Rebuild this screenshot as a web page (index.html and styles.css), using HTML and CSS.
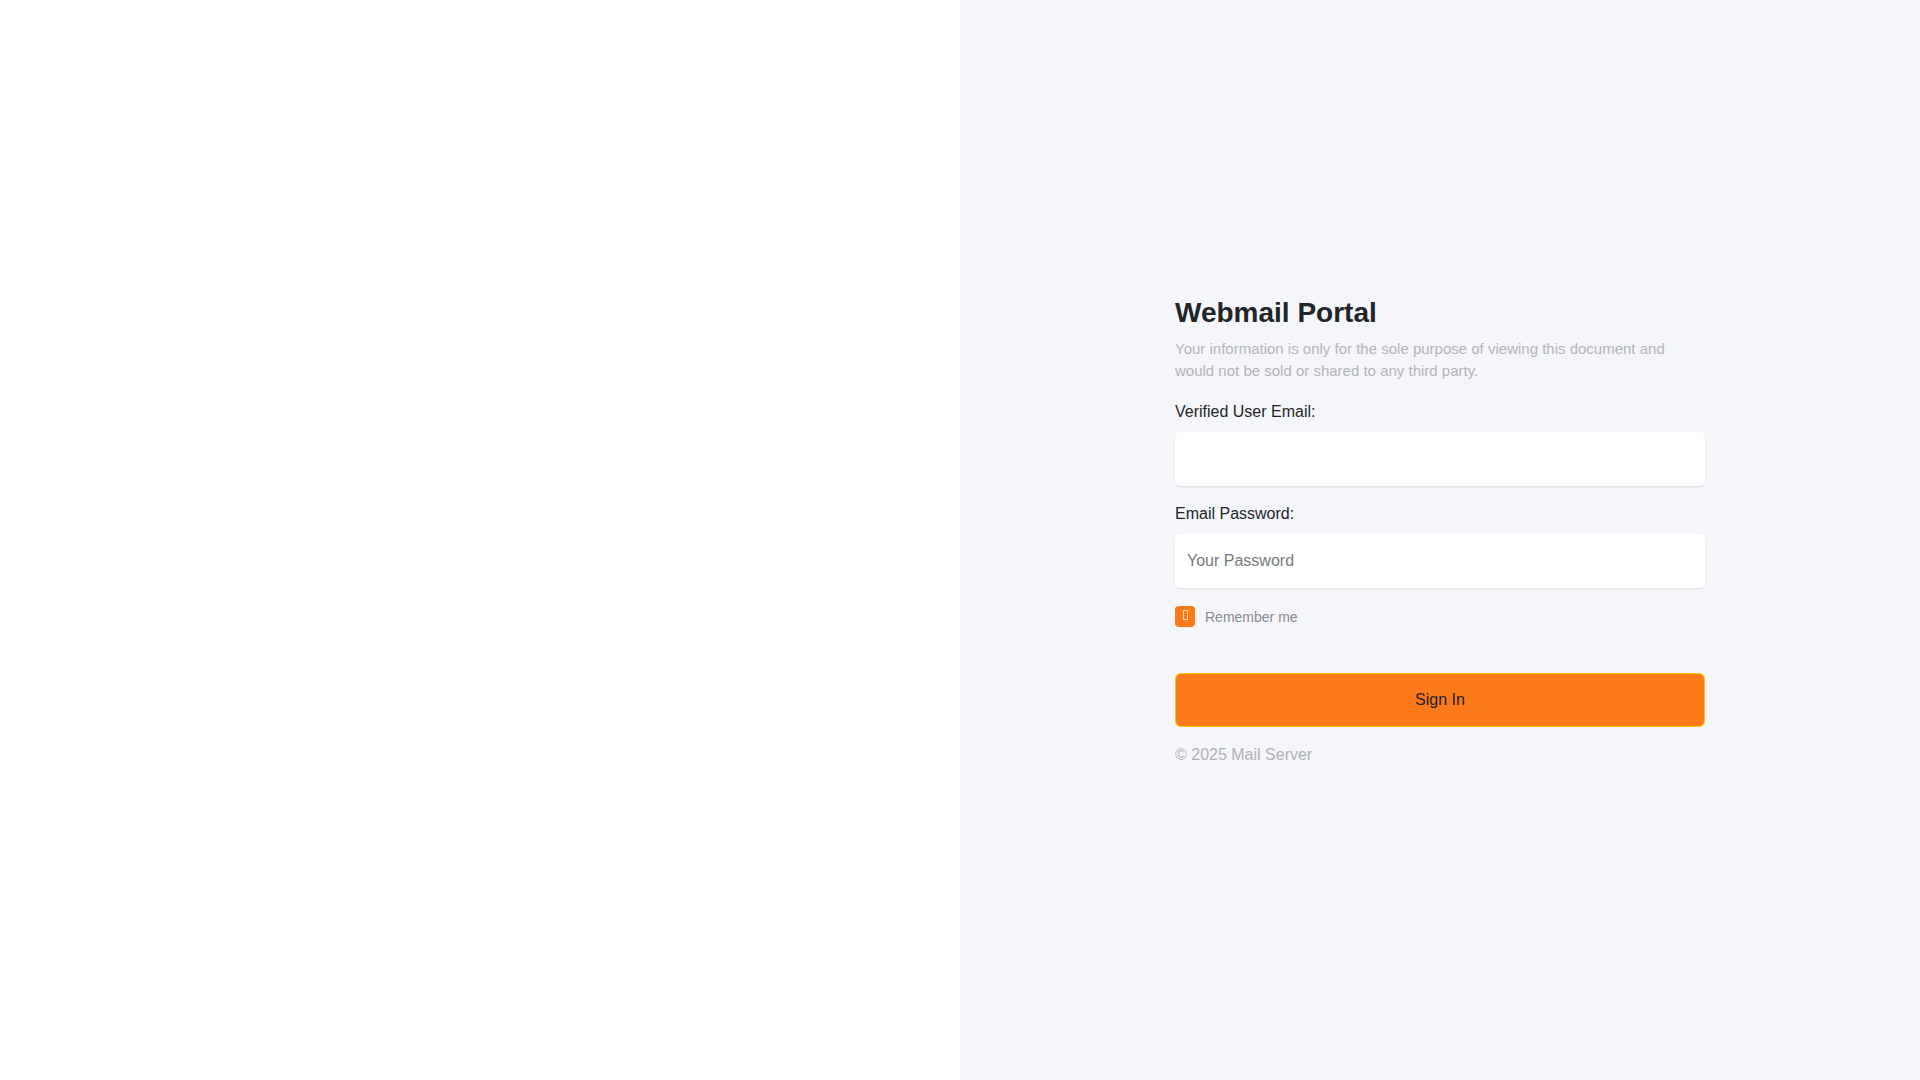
FILE: index.html
```html
<!DOCTYPE html>
<html lang="en">
<head>
<meta charset="utf-8">
<title>Webmail Portal</title>
<link rel="stylesheet" href="styles.css">
</head>
<body>
<div class="page">
  <div class="left"></div>
  <div class="right">
    <form class="login" onsubmit="return false">
      <h1 class="title">Webmail Portal</h1>
      <p class="subtitle">Your information is only for the sole purpose of viewing this document and would not be sold or shared to any third party.</p>
      <label class="field-label" for="email">Verified User Email:</label>
      <input class="field" id="email" type="email">
      <label class="field-label second" for="pass">Email Password:</label>
      <input class="field" id="pass" type="password" placeholder="Your Password">
      <div class="remember">
        <span class="check"><span class="tofu"></span></span>
        <span class="remember-text">Remember me</span>
      </div>
      <button class="signin" type="submit">Sign In</button>
      <div class="footer">© 2025 Mail Server</div>
    </form>
  </div>
</div>
</body>
</html>
```

FILE: styles.css
```css
* { box-sizing: border-box; }
html, body { margin: 0; padding: 0; }
body {
  font-family: "Liberation Sans", Arial, sans-serif;
  color: #212529;
  background: #ffffff;
}
.page {
  display: grid;
  grid-template-columns: 1fr 1fr;
  height: 100vh;
}
.left { background: #ffffff; }
.right {
  background: #f5f6fa;
  display: flex;
  align-items: center;
  justify-content: center;
}
.login {
  width: 530px;
  display: flex;
  flex-direction: column;
  margin-bottom: 20px;
}
.title {
  margin: 0;
  font-size: 28px;
  line-height: 1.2;
  font-weight: 700;
  color: #212529;
}
.subtitle {
  margin: 8px 0 0;
  font-size: 15px;
  line-height: 22.5px;
  color: #b4b5ba;
}
.field-label {
  margin-top: 20px;
  font-size: 16px;
  line-height: 18px;
  color: #212529;
}
.field-label.second { margin-top: 19px; }
.field {
  margin-top: 11px;
  height: 54px;
  width: 100%;
  border: none;
  border-radius: 5px;
  background: #ffffff;
  box-shadow: 0 1px 2px rgba(0, 0, 0, 0.09);
  padding: 0 12px;
  font-family: "Liberation Sans", Arial, sans-serif;
  font-size: 16px;
  color: #212529;
  outline: none;
}
.field::placeholder { color: #777a7e; }
.remember {
  margin-top: 18px;
  display: flex;
  align-items: center;
  height: 21px;
}
.check {
  width: 20px;
  height: 21px;
  border-radius: 4px;
  background: #fd7a1a;
  display: flex;
  align-items: center;
  justify-content: center;
}
.tofu {
  width: 5px;
  height: 10px;
  border: 1px solid rgba(255, 225, 190, 0.9);
  margin-top: -3px;
}
.remember-text {
  margin-left: 10px;
  font-size: 14px;
  color: #8a8b8f;
  margin-top: 2px;
}
.signin {
  margin-top: 46px;
  height: 54px;
  width: 100%;
  background: #fd7a1a;
  border: 1px solid #ffc107;
  border-radius: 6px;
  color: #222222;
  font-family: "Liberation Sans", Arial, sans-serif;
  font-size: 16px;
  cursor: pointer;
}
.footer {
  margin-top: 19px;
  font-size: 16px;
  line-height: 18px;
  color: #b0b1b5;
}
```
